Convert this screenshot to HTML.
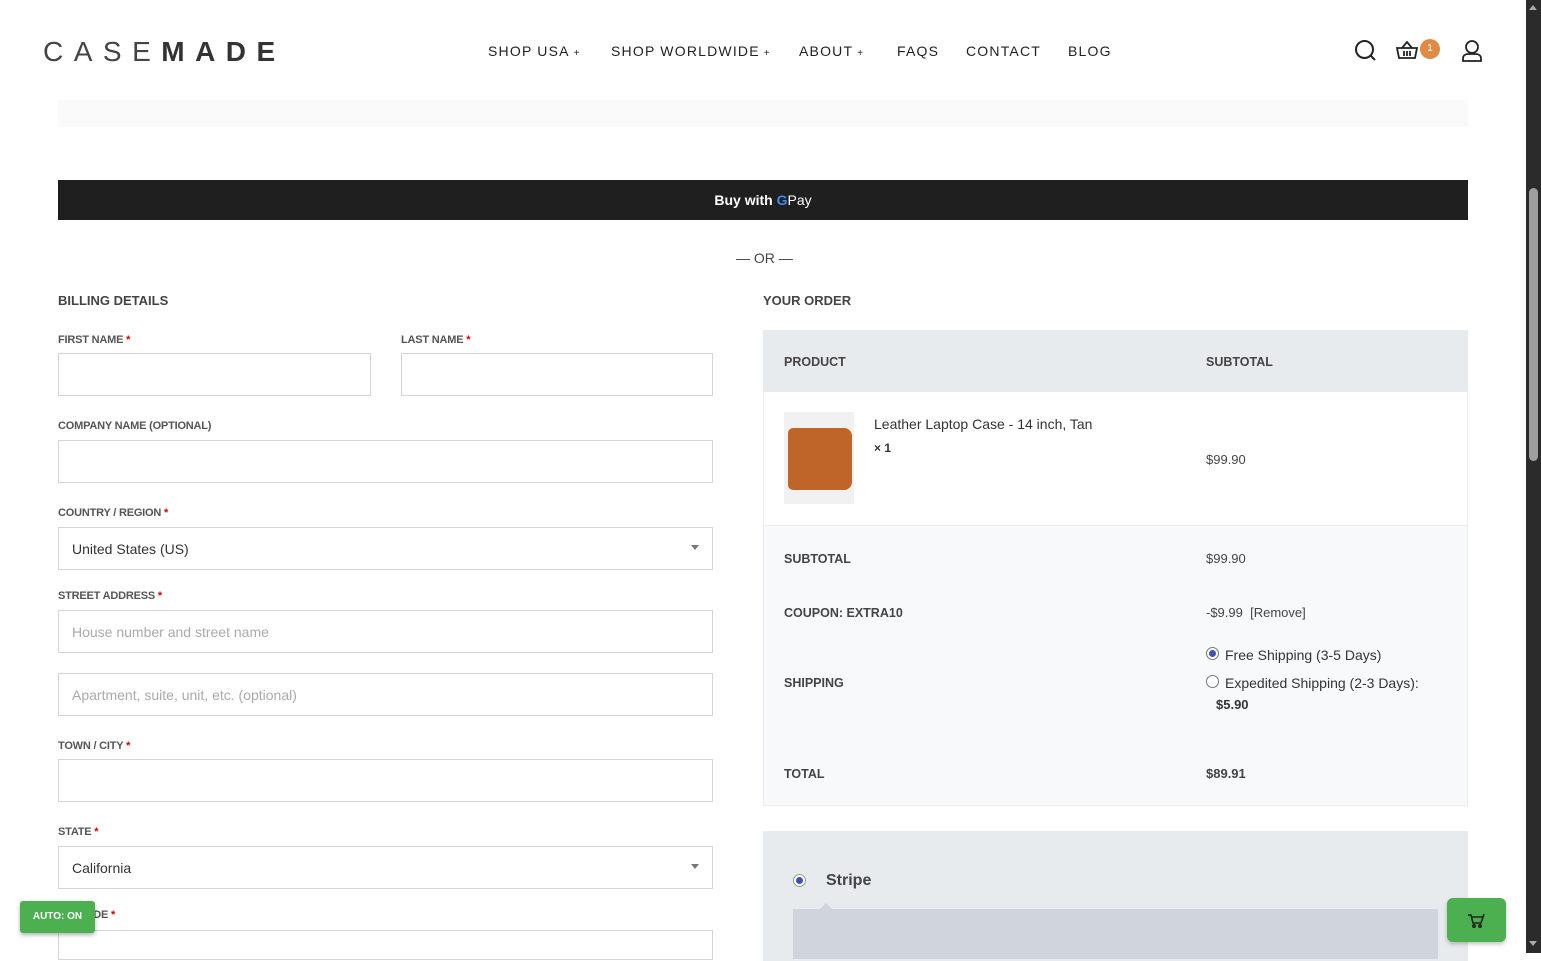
<!DOCTYPE html>
<html><head><meta charset="utf-8"><style>
*{box-sizing:border-box;margin:0;padding:0}
body{width:1541px;height:953px;overflow:hidden;background:#fff;font-family:"Liberation Sans",sans-serif;color:#333;position:relative}
.a{position:absolute}
.nav{font-size:14px;letter-spacing:1.2px;color:#222;top:43px}
.lbl{font-family:"Liberation Sans Narrow","Liberation Sans",sans-serif;font-size:11px;font-weight:bold;color:#555;letter-spacing:-.2px}
.lbl b{color:#c00}
.in{border:1px solid #d4d4d4;background:#fff;height:43px}
.sel{font-size:14px;color:#333;padding:13px 13px}
.ph{font-size:14px;color:#aaa;padding:13px 13px}
.arr{position:absolute;right:13px;top:17px;width:0;height:0;border-left:4px solid transparent;border-right:4px solid transparent;border-top:5px solid #777}
.th{font-family:"Liberation Sans Narrow","Liberation Sans",sans-serif;font-size:12.5px;font-weight:bold;color:#444}
.v{font-size:13px;color:#444}
</style></head><body>
<div class="a" style="left:43px;top:37px;font-size:28px;letter-spacing:10.5px;color:#333;line-height:30px"><span style="font-weight:300;color:#444">CASE</span><span style="font-weight:bold">MADE</span></div>
<div class="a nav" style="left:488px">SHOP USA<span style="font-size:10px"> +</span></div>
<div class="a nav" style="left:611px">SHOP WORLDWIDE<span style="font-size:10px"> +</span></div>
<div class="a nav" style="left:799px">ABOUT<span style="font-size:10px"> +</span></div>
<div class="a nav" style="left:897px">FAQS</div>
<div class="a nav" style="left:966px">CONTACT</div>
<div class="a nav" style="left:1068px">BLOG</div>
<svg class="a" style="left:1354px;top:39px" width="24" height="24" viewBox="0 0 24 24" fill="none" stroke="#222" stroke-width="2"><circle cx="10.5" cy="10.5" r="8.5"/><path d="M17 17l4 4"/></svg>
<svg class="a" style="left:1396px;top:40px" width="22" height="20" viewBox="0 0 22 20" fill="none" stroke="#222" stroke-width="1.8"><path d="M1 8h20l-2 10H3z M6 8l5-6 5 6 M8 11v5 M11 11v5 M14 11v5"/></svg>
<div class="a" style="left:1420px;top:39px;width:20px;height:20px;border-radius:50%;background:#e08a45;color:#fff;font-size:10px;text-align:center;line-height:20px">1</div>
<svg class="a" style="left:1460px;top:39px" width="24" height="24" viewBox="0 0 24 24" fill="none" stroke="#222" stroke-width="1.8"><circle cx="12" cy="8" r="6"/><path d="M3 22v-3c0-2 2-4 5-4h8c3 0 5 2 5 4v3z"/></svg>
<div class="a" style="left:58px;top:100px;width:1410px;height:27px;background:#fafafa"></div>
<div class="a" style="left:58px;top:180px;width:1410px;height:40px;background:#1f1f1f;color:#fff;font-size:14px;font-weight:bold;text-align:center;line-height:40px">Buy with <span style="color:#4285f4">G</span><span style="font-weight:normal">Pay</span></div>
<div class="a" style="left:736px;top:250px;font-size:14px;color:#444">— OR —</div>
<div class="a" style="left:58px;top:293px;font-size:13px;font-weight:bold;color:#444">BILLING DETAILS</div>
<div class="a" style="left:763px;top:293px;font-size:13px;font-weight:bold;color:#444">YOUR ORDER</div>
<div class="a lbl" style="left:58px;top:334px">FIRST NAME <b>*</b></div>
<div class="a lbl" style="left:401px;top:334px">LAST NAME <b>*</b></div>
<div class="a in" style="left:58px;top:353px;width:313px"></div>
<div class="a in" style="left:401px;top:353px;width:312px"></div>
<div class="a lbl" style="left:58px;top:420px">COMPANY NAME (OPTIONAL)</div>
<div class="a in" style="left:58px;top:440px;width:655px"></div>
<div class="a lbl" style="left:58px;top:507px">COUNTRY / REGION <b>*</b></div>
<div class="a in sel" style="left:58px;top:527px;width:655px">United States (US)<span class="arr"></span></div>
<div class="a lbl" style="left:58px;top:590px">STREET ADDRESS <b>*</b></div>
<div class="a in ph" style="left:58px;top:610px;width:655px">House number and street name</div>
<div class="a in ph" style="left:58px;top:673px;width:655px">Apartment, suite, unit, etc. (optional)</div>
<div class="a lbl" style="left:58px;top:740px">TOWN / CITY <b>*</b></div>
<div class="a in" style="left:58px;top:759px;width:655px"></div>
<div class="a lbl" style="left:58px;top:826px">STATE <b>*</b></div>
<div class="a in sel" style="left:58px;top:846px;width:655px">California<span class="arr"></span></div>
<div class="a lbl" style="left:58px;top:909px">ZIP CODE <b>*</b></div>
<div class="a in" style="left:58px;top:930px;width:655px;height:30px"></div>
<div class="a" style="left:20px;top:901px;width:75px;height:32px;background:#4caf50;border-radius:3px;box-shadow:0 2px 4px rgba(0,0,0,.3);color:#fff;font-size:10px;font-weight:bold;text-align:center;line-height:32px">AUTO: ON</div>
<div class="a" style="left:763px;top:330px;width:705px;height:476px;background:#f8f9fa;border:1px solid #eceef0"></div>
<div class="a" style="left:763px;top:330px;width:705px;height:62px;background:#e8ebee"></div>
<div class="a th" style="left:784px;top:355px">PRODUCT</div>
<div class="a th" style="left:1206px;top:355px">SUBTOTAL</div>
<div class="a" style="left:764px;top:392px;width:703px;height:134px;background:#fff;border-bottom:1px solid #eceef0"></div>
<div class="a" style="left:784px;top:412px;width:70px;height:92px;background:#f1f1f1"></div>
<div class="a" style="left:788px;top:428px;width:64px;height:62px;background:#c0652a;border-radius:5px 8px 8px 5px"></div>
<div class="a" style="left:874px;top:416px;font-size:14px;color:#333">Leather Laptop Case - 14 inch, Tan</div>
<div class="a" style="left:874px;top:441px;font-size:12px;font-weight:bold;color:#333">× 1</div>
<div class="a v" style="left:1206px;top:452px">$99.90</div>
<div class="a th" style="left:784px;top:552px">SUBTOTAL</div>
<div class="a v" style="left:1206px;top:551px">$99.90</div>
<div class="a th" style="left:784px;top:606px">COUPON: EXTRA10</div>
<div class="a v" style="left:1206px;top:605px">-$9.99 &nbsp;[Remove]</div>
<div class="a" style="left:1206px;top:647px;width:13px;height:13px;border-radius:50%;border:1px solid #777;background:#fff"><div style="margin:2px;width:7px;height:7px;border-radius:50%;background:#3f51b5"></div></div>
<div class="a" style="left:1225px;top:647px;font-size:14px;color:#333">Free Shipping (3-5 Days)</div>
<div class="a th" style="left:784px;top:676px">SHIPPING</div>
<div class="a" style="left:1206px;top:675px;width:13px;height:13px;border-radius:50%;border:1px solid #777;background:#fff"></div>
<div class="a" style="left:1225px;top:675px;font-size:14px;color:#333">Expedited Shipping (2-3 Days):</div>
<div class="a" style="left:1216px;top:697px;font-size:13px;font-weight:bold;color:#333">$5.90</div>
<div class="a th" style="left:784px;top:767px">TOTAL</div>
<div class="a v" style="left:1206px;top:766px;font-weight:bold">$89.91</div>
<div class="a" style="left:763px;top:831px;width:705px;height:130px;background:#e8ebee"></div>
<div class="a" style="left:793px;top:874px;width:13px;height:13px;border-radius:50%;border:1px solid #999;background:#fff"><div style="margin:2px;width:7px;height:7px;border-radius:50%;background:#3f51b5"></div></div>
<div class="a" style="left:826px;top:872px;font-size:16px;font-weight:bold;color:#444">Stripe</div>
<div class="a" style="left:793px;top:909px;width:645px;height:50px;background:#d0d5dd"></div>
<div class="a" style="left:820px;top:903px;width:0;height:0;border-left:6px solid transparent;border-right:6px solid transparent;border-bottom:6px solid #d0d5dd"></div>
<div class="a" style="left:1447px;top:898px;width:59px;height:44px;background:#4caf50;border-radius:6px;box-shadow:0 2px 4px rgba(0,0,0,.25)"></div>
<svg class="a" style="left:1467px;top:912px" width="18" height="16" viewBox="0 0 18 16" fill="none" stroke="#222" stroke-width="1.6"><path d="M1 3h3l2 8h8l2-6H5 M17 2l-1 3"/><circle cx="7" cy="14" r="1.2"/><circle cx="13" cy="14" r="1.2"/></svg>
<div class="a" style="left:1526px;top:0;width:15px;height:953px;background:#2b2b2b"></div>
<div class="a" style="left:1529px;top:188px;width:9px;height:273px;background:#9e9e9e;border-radius:5px"></div>
<div class="a" style="left:1529px;top:5px;border-left:4px solid transparent;border-right:4px solid transparent;border-bottom:5px solid #aaa"></div>
<div class="a" style="left:1529px;top:941px;border-left:4px solid transparent;border-right:4px solid transparent;border-top:5px solid #aaa"></div>
</body></html>
